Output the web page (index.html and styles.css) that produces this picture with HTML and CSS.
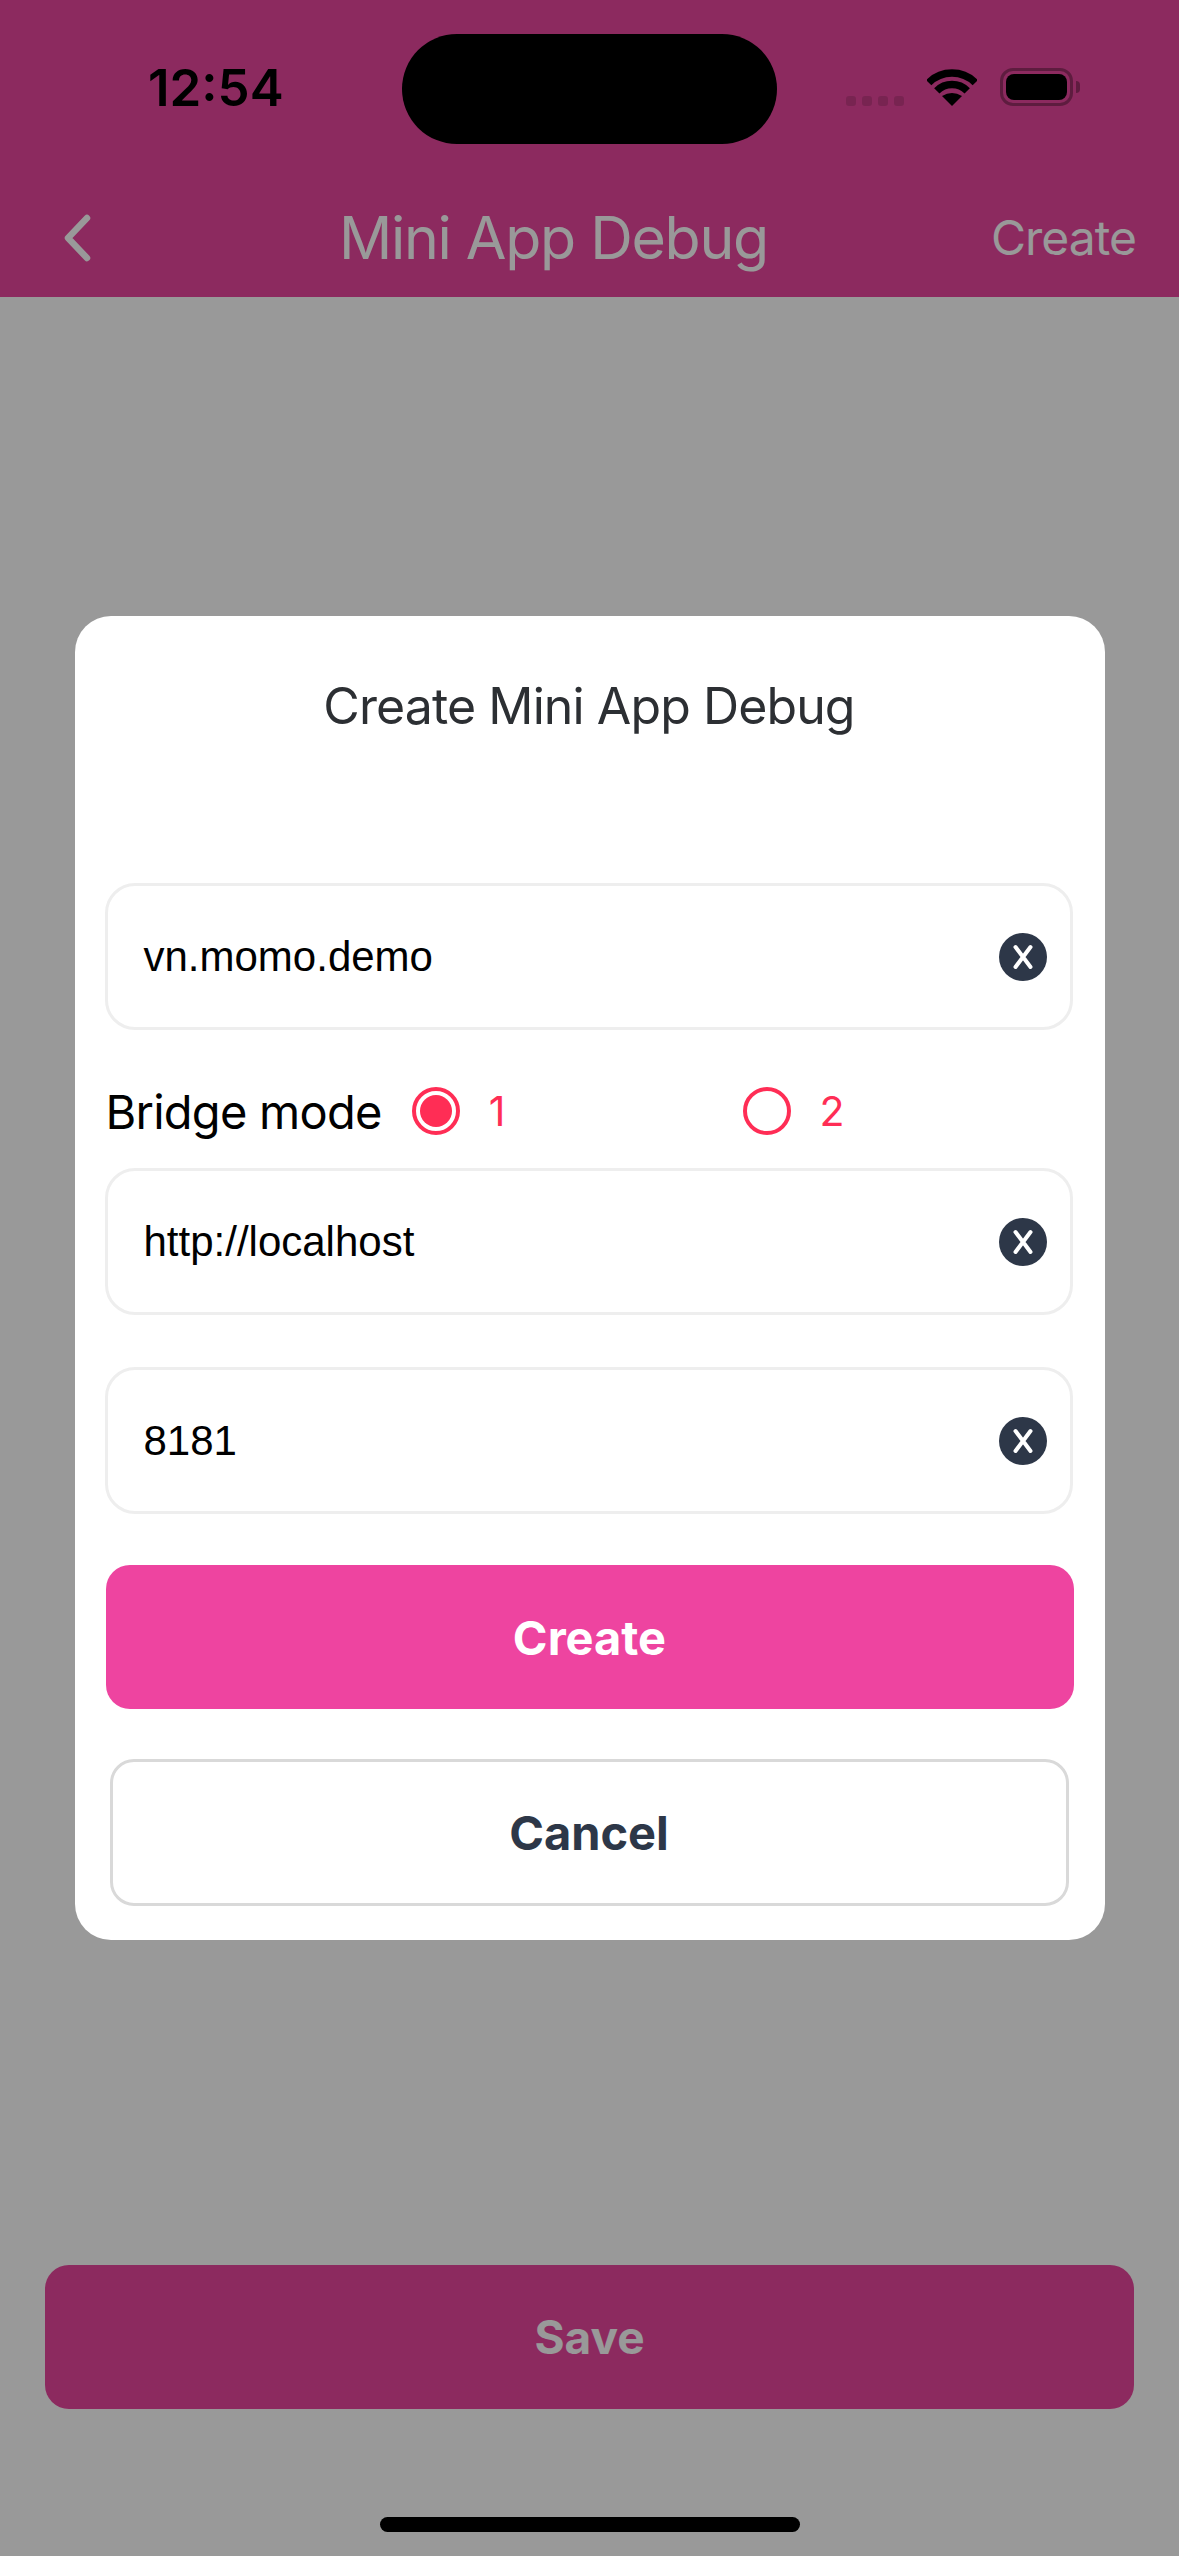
FILE: index.html
```html
<!DOCTYPE html>
<html lang="en">
<head>
    <meta charset="UTF-8">
    <meta name="viewport" content="width=device-width, initial-scale=1.0">
    <title>Mini App Debug</title>
    <link rel="stylesheet" href="styles.css">
</head>
<body>

    <div class="screen">
        <header class="app-header">
            <div class="status-bar">
                <div class="status-time">12:54</div>
                <div class="island"></div>
                <div class="status-icons">
                    <div class="signal">
                        <span></span><span></span><span></span><span></span>
                    </div>
                    <svg class="wifi" width="50" height="37" viewBox="0 0 50 37">
                        <path d="M1.7 13.7A33 33 0 0 1 48.3 13.7" fill="none" stroke="#000" stroke-width="7.5"/>
                        <path d="M9.8 21.8A21.5 21.5 0 0 1 40.2 21.8" fill="none" stroke="#000" stroke-width="7.5"/>
                        <path d="M25 37L15 27Q25 21 35 27Z" fill="#000"/>
                    </svg>
                    <div class="battery">
                        <div class="battery-body"><div class="battery-fill"></div></div>
                        <div class="battery-tip"></div>
                    </div>
                </div>
            </div>
            <nav class="nav-bar">
                <svg class="back" width="28" height="48" viewBox="0 0 28 48">
                    <path d="M24 4L5 24L24 44" fill="none" stroke="#fff" stroke-width="6.5" stroke-linecap="round" stroke-linejoin="round"/>
                </svg>
                <div class="nav-title">Mini App Debug</div>
                <div class="nav-action">Create</div>
            </nav>
        </header>

        <main class="content"></main>

        <div class="save-button">Save</div>
        <div class="home-indicator"></div>

        <div class="overlay">
            <div class="modal">
                <h2 class="modal-title">Create Mini App Debug</h2>

                <div class="field field-first">
                    <span class="field-value">vn.momo.demo</span>
                    <svg class="clear" width="48" height="48" viewBox="0 0 48 48">
                        <circle cx="24" cy="24" r="24" fill="#2d3748"/>
                        <path d="M16.5 14L31.5 34M31.5 14L16.5 34" stroke="#fff" stroke-width="4" stroke-linecap="round"/>
                    </svg>
                </div>

                <div class="bridge-row">
                    <span class="bridge-label">Bridge mode</span>
                    <div class="radio-option">
                        <span class="radio radio-on"></span>
                        <span class="radio-text">1</span>
                    </div>
                    <div class="radio-option">
                        <span class="radio"></span>
                        <span class="radio-text">2</span>
                    </div>
                </div>

                <div class="field">
                    <span class="field-value">http://localhost</span>
                    <svg class="clear" width="48" height="48" viewBox="0 0 48 48">
                        <circle cx="24" cy="24" r="24" fill="#2d3748"/>
                        <path d="M16.5 14L31.5 34M31.5 14L16.5 34" stroke="#fff" stroke-width="4" stroke-linecap="round"/>
                    </svg>
                </div>

                <div class="field field-port">
                    <span class="field-value">8181</span>
                    <svg class="clear" width="48" height="48" viewBox="0 0 48 48">
                        <circle cx="24" cy="24" r="24" fill="#2d3748"/>
                        <path d="M16.5 14L31.5 34M31.5 14L16.5 34" stroke="#fff" stroke-width="4" stroke-linecap="round"/>
                    </svg>
                </div>

                <div class="btn btn-create">Create</div>
                <div class="btn btn-cancel">Cancel</div>
            </div>
        </div>
    </div>

</body>
</html>
```

FILE: styles.css
```css
body {
    margin: 0;
    background-color: #fff;
    font-family: Inter, "Liberation Sans", sans-serif;
}
.screen {
    position: relative;
    display: flex;
    flex-direction: column;
    width: 1179px;
    height: 2556px;
    overflow: hidden;
}
.app-header {
    height: 297px;
    background-color: #ea469e;
}
.status-bar {
    display: grid;
    grid-template-columns: 402px 375px 1fr;
    height: 180px;
}
.status-time {
    padding: 58px 0 0 148px;
    font-size: 51px;
    line-height: 60px;
    font-weight: 600;
    color: #000;
}
.island {
    height: 110px;
    margin-top: 34px;
    background-color: #000;
    border-radius: 55px;
}
.status-icons {
    display: flex;
    align-items: flex-end;
    height: 106px;
    padding-left: 69px;
}
.signal {
    display: flex;
    gap: 6px;
    margin-right: 23px;
}
.signal span {
    width: 10px;
    height: 10px;
    background-color: rgba(0, 0, 0, 0.14);
    border-radius: 3px;
}
.wifi {
    display: block;
    margin-right: 23px;
}
.battery {
    display: flex;
    align-items: center;
}
.battery-body {
    box-sizing: border-box;
    width: 73px;
    height: 38px;
    padding: 3px;
    border: 3px solid rgba(0, 0, 0, 0.33);
    border-radius: 13px;
}
.battery-fill {
    height: 100%;
    background-color: #000;
    border-radius: 8px;
}
.battery-tip {
    width: 4px;
    height: 12px;
    margin-left: 3px;
    background-color: rgba(0, 0, 0, 0.33);
    border-radius: 0 6px 6px 0;
}
.nav-bar {
    display: flex;
    align-items: center;
    height: 115px;
    padding: 0 43px 0 63px;
    color: #fff;
}
.back {
    display: block;
    margin-right: 248px;
}
.nav-title {
    font-size: 59px;
    line-height: 70px;
    letter-spacing: -1.3px;
}
.nav-action {
    margin-left: auto;
    font-size: 48px;
    line-height: 56px;
    letter-spacing: -1px;
}
.content {
    flex: 1;
}
.save-button {
    display: flex;
    align-items: center;
    justify-content: center;
    height: 144px;
    margin: 0 45px;
    background-color: #ea469e;
    border-radius: 24px;
    color: #fff;
    font-size: 46px;
    font-weight: 700;
}
.home-indicator {
    width: 420px;
    height: 15px;
    margin: 108px auto 24px;
    background-color: #000;
    border-radius: 8px;
}
.overlay {
    position: absolute;
    inset: 0;
    display: flex;
    align-items: center;
    justify-content: center;
    background-color: rgba(0, 0, 0, 0.4);
}
.modal {
    box-sizing: border-box;
    width: 1030px;
    height: 1324px;
    padding: 60px 31px 0 30px;
    background-color: #fff;
    border-radius: 36px;
}
.modal-title {
    margin: 0;
    font-size: 50px;
    line-height: 60px;
    font-weight: 400;
    letter-spacing: -0.9px;
    color: #2c2f33;
    text-align: center;
}
.field {
    box-sizing: border-box;
    display: flex;
    align-items: center;
    justify-content: space-between;
    height: 147px;
    margin-right: 1px;
    padding: 0 23px 0 36px;
    border: 3px solid #eee;
    border-radius: 30px;
}
.field-first {
    margin-top: 147px;
}
.field-port {
    margin-top: 52px;
}
.field-value {
    font-family: "Liberation Sans", Arial, sans-serif;
    font-size: 42px;
    color: #000;
}
.clear {
    display: block;
}
.bridge-row {
    display: flex;
    align-items: center;
    height: 64px;
    margin: 49px 0 25px;
}
.bridge-label {
    box-sizing: border-box;
    width: 310px;
    padding-left: 1px;
    font-size: 47px;
    letter-spacing: -0.75px;
    color: #000;
}
.radio-option {
    display: flex;
    align-items: center;
    gap: 29px;
    width: 334px;
}
.radio {
    box-sizing: border-box;
    display: flex;
    align-items: center;
    justify-content: center;
    width: 48px;
    height: 48px;
    border: 4px solid #ff2d55;
    border-radius: 50%;
}
.radio-on::after {
    content: "";
    width: 32px;
    height: 32px;
    background-color: #ff2d55;
    border-radius: 50%;
}
.radio-text {
    font-size: 41px;
    color: #ff2d55;
}
.btn {
    box-sizing: border-box;
    display: flex;
    align-items: center;
    justify-content: center;
    font-size: 47px;
    font-weight: 700;
}
.btn-create {
    height: 144px;
    margin: 51px 0 50px 1px;
    background-color: #ee44a0;
    border-radius: 24px;
    color: #fff;
}
.btn-cancel {
    height: 147px;
    margin: 0 5px;
    border: 3px solid #d9d9d9;
    border-radius: 24px;
    color: #2d3748;
}
```
